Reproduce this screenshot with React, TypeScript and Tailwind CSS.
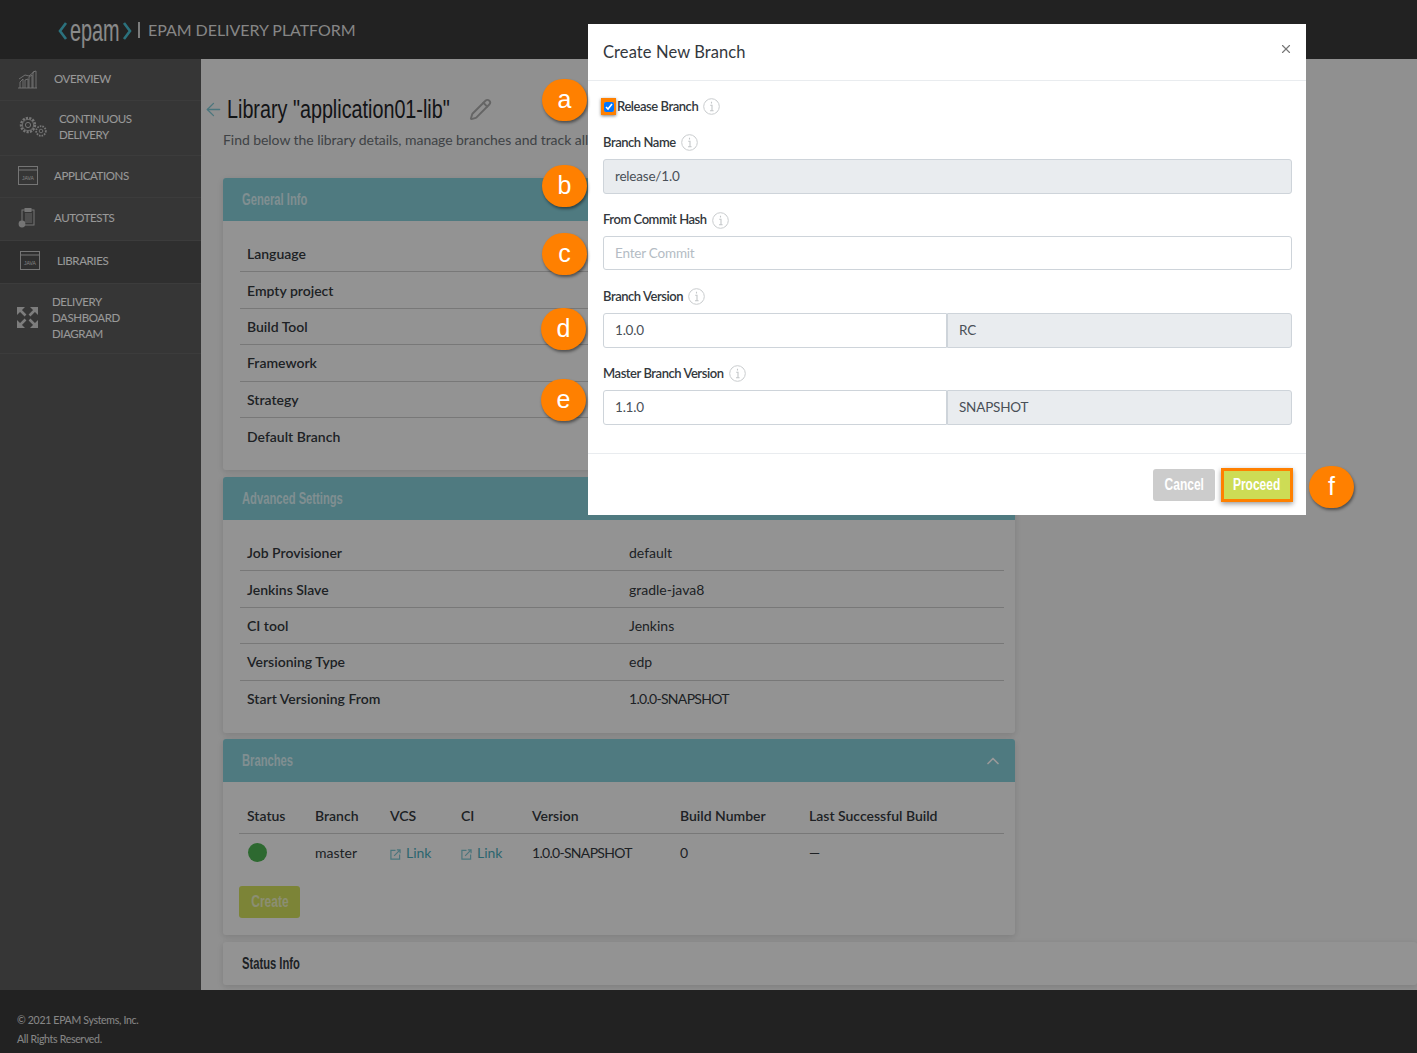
import { ArrowLeft, ChevronUp, Pencil, X } from "lucide-react";

const generalRows = ["Language", "Empty project", "Build Tool", "Framework", "Strategy", "Default Branch"];

const advancedRows = [
  ["Job Provisioner", "default"],
  ["Jenkins Slave", "gradle-java8"],
  ["CI tool", "Jenkins"],
  ["Versioning Type", "edp"],
  ["Start Versioning From", "1.0.0-SNAPSHOT"],
];

const InfoIcon = () => (
  <svg width="17" height="17" viewBox="0 0 17 17" fill="none" className="ml-[5px] shrink-0">
    <circle cx="8.5" cy="8.500" r="7.800" stroke="#c9ccce" strokeWidth="1" />
    <path d="M8.500 3.800v1.700M7.200 7.200H9v5.600M7 12.800h3.600" stroke="#c4c7c9" strokeWidth="1.100" />
  </svg>
);

const LinkIcon = () => (
  <svg width="11" height="11" viewBox="0 0 12 12" fill="none" className="mr-[5px] inline-block">
    <path d="M6 1.500H1v9.500h9.500V6" stroke="#7ec3cf" strokeWidth="1.300" />
    <path d="M4.500 7.500 11 1M7.500 1H11v3.500" stroke="#7ec3cf" strokeWidth="1.300" />
  </svg>
);

const JavaIcon = () => (
  <svg width="20" height="20" viewBox="0 0 20 20" fill="none">
    <rect x="0.500" y="0.500" width="19" height="18" stroke="#c4c4c4" />
    <path d="M0.500 4h19" stroke="#c4c4c4" />
    <text x="10" y="13.500" textAnchor="middle" fontSize="5" fontFamily="Liberation Sans" fill="#d8d8d8">
      JAVA
    </text>
  </svg>
);

const OverviewIcon = () => (
  <svg width="20" height="20" viewBox="0 0 20 20" fill="none" stroke="#c4c4c4" strokeWidth="0.900">
    <path d="M0 19h19M2 19v-6l3-3v9M7 19v-8l3-1v9M11 19V8l3-2v13M15 19V3l3-1v17" />
    <path d="M1 10 7 6l4 1 6-5" />
  </svg>
);

const GearsIcon = () => (
  <svg width="30" height="24" viewBox="0 0 30 24" fill="none" stroke="#c4c4c4">
    <circle cx="10" cy="10" r="7" strokeWidth="2.400" strokeDasharray="2.200 1.200" />
    <circle cx="10" cy="10" r="5.600" strokeWidth="0.800" />
    <circle cx="10" cy="10" r="2.600" strokeWidth="1" />
    <circle cx="23" cy="16" r="4.800" strokeWidth="1.800" strokeDasharray="1.600 1" />
    <circle cx="23" cy="16" r="1.800" strokeWidth="0.900" />
  </svg>
);

const TestsIcon = () => (
  <svg width="18" height="20" viewBox="0 0 18 20" fill="none" stroke="#c4c4c4" strokeWidth="1">
    <rect x="4" y="2" width="12" height="15" />
    <rect x="7" y="0.500" width="6" height="3" fill="#c4c4c4" />
    <path d="M7 6h7M7 8h7M7 10h7M7 12h7M7 14h7" strokeWidth="0.800" />
    <circle cx="4" cy="16" r="3.400" fill="#c4c4c4" stroke="none" />
  </svg>
);

const ExpandIcon = () => (
  <svg width="21" height="21" viewBox="0 0 21 21" fill="#d0d0d0" stroke="#d0d0d0">
    <path d="M0 0h8L0 8zM21 0h-8l8 8zM0 21h8l-8-8zM21 21h-8l8-8z" stroke="none" />
    <path d="M3 3l5.500 5.500M18 3l-5.500 5.500M3 18l5.500-5.500M18 18l-5.500-5.500" strokeWidth="2.600" />
  </svg>
);

const navItems = [
  { lines: ["OVERVIEW"], icon: <OverviewIcon />, cls: "h-[42px] pl-[18px] gap-[16px]" },
  { lines: ["CONTINUOUS", "DELIVERY"], icon: <GearsIcon />, cls: "h-[55px] pl-[18px] gap-[11px]" },
  { lines: ["APPLICATIONS"], icon: <JavaIcon />, cls: "h-[42px] pl-[18px] gap-[16px]" },
  { lines: ["AUTOTESTS"], icon: <TestsIcon />, cls: "h-[43px] pl-[18px] gap-[18px]" },
  { lines: ["LIBRARIES"], icon: <JavaIcon />, cls: "h-[43px] pl-[20px] gap-[17px] bg-[#4f4f4f]" },
  { lines: ["DELIVERY", "DASHBOARD", "DIAGRAM"], icon: <ExpandIcon />, cls: "h-[70px] pl-[17px] gap-[14px]" },
];

const Sidebar = () => (
  <aside className="w-[201px] shrink-0 bg-[#5a5a5a]">
    {navItems.map((item) => (
      <div key={item.lines[0]} className={`flex items-center border-b border-[#656565] pb-[2px] ${item.cls}`}>
        <span className="flex shrink-0 items-center">{item.icon}</span>
        <span className="font-['Lato',sans-serif] text-[11.500px] leading-[16px] tracking-[-0.400px] text-white">
          {item.lines.map((line) => (
            <span key={line} className="block">
              {line}
            </span>
          ))}
        </span>
      </div>
    ))}
  </aside>
);

// no condensed face is installed, so the heading font is squeezed from Liberation Sans
const Narrow = ({ children, className }: { children: React.ReactNode; className: string }) => (
  <span className={`inline-block origin-left scale-x-[0.7] whitespace-nowrap font-['Liberation_Sans',sans-serif] text-[16px] font-bold ${className}`}>
    {children}
  </span>
);

const CardHeader = ({ title }: { title: string }) => (
  <div className="flex h-[43px] items-center justify-between rounded-t-[3px] bg-[#84cbd5] pl-[19px] pr-[12px]">
    <Narrow className="text-[#d6eef2]">{title}</Narrow>
    <ChevronUp className="h-[20px] w-[20px] text-white" strokeWidth={2} />
  </div>
);

const InfoRow = ({ label, value, last }: { label: string; value?: string; last?: boolean }) => (
  <div className={`flex h-[36.400px] items-center pl-[7px] ${last ? "" : "border-b border-[#c9c9c9]"}`}>
    <span className="w-[382px] font-semibold text-[#33383d]">{label}</span>
    <span className={`text-[#33383d] ${last ? "tracking-[-0.700px]" : ""}`}>{value}</span>
  </div>
);

const Shell = ({ children, className }: { children: React.ReactNode; className: string }) => (
  <section className={`w-[792px] rounded-[3px] bg-[#f6f6f6] shadow-[0_2px_6px_rgba(0,0,0,0.12)] ${className}`}>
    {children}
  </section>
);

const Label = ({ text }: { text: string }) => (
  <div className="flex h-[17px] items-center text-[13px] font-semibold tracking-[-0.450px] text-[#33383d]">
    {text}
    <InfoIcon />
  </div>
);

const inputBase =
  "h-[34.500px] border border-[#ced4da] px-[11px] flex items-center text-[13.500px] text-[#495057] tracking-[-0.200px]";

const VersionRow = ({ label, left, right }: { label: string; left: string; right: string }) => (
  <div className="flex flex-col gap-[8px]">
    <Label text={label} />
    <div className="flex">
      <div className={`${inputBase} w-[344px] rounded-l-[3px] bg-white`}>{left}</div>
      <div className={`${inputBase} w-[345px] rounded-r-[3px] bg-[#e9ecef]`}>{right}</div>
    </div>
  </div>
);

const Callout = ({ letter, className }: { letter: string; className: string }) => (
  <div
    className={`absolute flex h-[42px] w-[45px] items-center justify-center rounded-full bg-[#ff8000] font-['Liberation_Sans',sans-serif] text-[25px] text-white shadow-[1px_2px_3px_rgba(0,0,0,0.45)] ${className}`}
  >
    {letter}
  </div>
);

const ButtonLabel = ({ children }: { children: string }) => (
  <span className="inline-block scale-x-[0.75] font-['Liberation_Sans',sans-serif] text-[16px] font-bold">{children}</span>
);

export default function App() {
  return (
    <div className="relative flex h-[1053px] flex-col overflow-hidden bg-[#f0f0f0] font-['Lato',sans-serif] text-[14px]">
      <header className="flex h-[59px] shrink-0 items-center bg-[#393939] pl-[58px]">
        <svg width="10" height="22" viewBox="0 0 10 22" fill="none" className="mt-[2px]">
          <path d="M8 3 2 11l6 8" stroke="#49bdd0" strokeWidth="2.600" />
        </svg>
        <span className="ml-[2px] inline-block w-[50px] origin-left scale-x-[0.62] font-['Liberation_Sans',sans-serif] text-[32px] leading-[30px] text-[#e6e6e6]">
          epam
        </span>
        <svg width="10" height="22" viewBox="0 0 10 22" fill="none" className="ml-[2px] mt-[2px]">
          <path d="M2 3l6 8-6 8" stroke="#49bdd0" strokeWidth="2.600" />
        </svg>
        <span className="ml-[6px] h-[16px] w-[2px] bg-[#cfcfcf]" />
        <span className="ml-[8px] text-[16px] tracking-[-0.050px] text-[#dfdfdf]">EPAM DELIVERY PLATFORM</span>
      </header>

      <div className="flex min-h-0 flex-1">
        <Sidebar />
        <main className="min-w-0 flex-1 overflow-hidden pl-[22px]">
          <div className="mt-[32px] flex h-[37px] items-center">
            <ArrowLeft className="-ml-[20px] mr-[3px] h-[21px] w-[21px] text-[#7cc4d0]" strokeWidth={1.500} />
            <h1 className="w-[231px] origin-left scale-x-[0.76] whitespace-nowrap font-['Liberation_Sans',sans-serif] text-[26px] text-[#1f2327]">
              Library "application01-lib"
            </h1>
            <Pencil className="ml-[11px] h-[23px] w-[23px] text-[#a8a8a8]" />
          </div>
          <p className="mt-[3px] h-[18px] leading-[18px] tracking-[-0.050px] text-[#6a6f74]">
            Find below the library details, manage branches and track all
          </p>

          <Shell className="mt-[29px] h-[292px]">
            <CardHeader title="General Info" />
            <div className="px-[11px] pt-[15px]">
              <div className="ml-[6px]">
                {generalRows.map((label, i) => (
                  <InfoRow key={label} label={label} last={i === generalRows.length - 1} />
                ))}
              </div>
            </div>
          </Shell>

          <Shell className="mt-[7px] h-[256px]">
            <CardHeader title="Advanced Settings" />
            <div className="px-[11px] pt-[15px]">
              <div className="ml-[6px]">
                {advancedRows.map(([label, value], i) => (
                  <InfoRow key={label} label={label} value={value} last={i === advancedRows.length - 1} />
                ))}
              </div>
            </div>
          </Shell>

          <Shell className="mt-[6px] h-[196px]">
            <CardHeader title="Branches" />
            <div className="pl-[16px] pr-[11px] pt-[15px]">
              <div className="grid h-[37px] grid-cols-[68px_75px_71px_71px_148px_129px_1fr] items-center border-b border-[#c9c9c9] pl-[8px] font-semibold text-[#33383d]">
                <span>Status</span>
                <span>Branch</span>
                <span>VCS</span>
                <span>CI</span>
                <span>Version</span>
                <span>Build Number</span>
                <span>Last Successful Build</span>
              </div>
              <div className="grid h-[37px] grid-cols-[68px_75px_71px_71px_148px_129px_1fr] items-center pl-[8px] text-[#33383d]">
                <span className="ml-[1px] block h-[19px] w-[19px] rounded-full bg-[#4cb050]" />
                <span>master</span>
                <span className="text-[#4aa9b8]">
                  <LinkIcon />
                  Link
                </span>
                <span className="text-[#4aa9b8]">
                  <LinkIcon />
                  Link
                </span>
                <span className="tracking-[-0.700px]">1.0.0-SNAPSHOT</span>
                <span>0</span>
                <span>—</span>
              </div>
              <button className="mt-[15px] h-[32px] w-[61px] rounded-[3px] bg-[#cfdc5c] text-[#e8edc0]">
                <ButtonLabel>Create</ButtonLabel>
              </button>
            </div>
          </Shell>

          <section className="mt-[7px] flex h-[43px] items-center rounded-[3px] bg-[#f6f6f6] pl-[19px] shadow-[0_2px_6px_rgba(0,0,0,0.12)]">
            <Narrow className="text-[#33383d]">Status Info</Narrow>
          </section>
        </main>
      </div>

      <footer className="flex h-[63px] shrink-0 flex-col justify-center gap-[3px] bg-[#393939] pl-[17px] pt-[15px] text-[10.500px] leading-[16px] tracking-[-0.300px] text-[#e0e0e0]">
        <span>© 2021 EPAM Systems, Inc.</span>
        <span>All Rights Reserved.</span>
      </footer>

      {/* backdrop and dialog */}
      <div className="absolute inset-0 bg-black/40 pl-[588px] pt-[24px]">
        <div className="w-[718px] bg-white text-[#495057]">
          <div className="flex h-[57px] items-center justify-between border-b border-[#e9ecef] pl-[15px] pr-[13px]">
            <h2 className="pt-[1px] text-[16.500px] tracking-[0.100px] text-[#33383d]">Create New Branch</h2>
            <X className="-mt-[6px] h-[14px] w-[14px] text-[#777]" strokeWidth={2} />
          </div>

          <div className="flex h-[372px] flex-col pl-[15px] pr-[14px]">
            <label className="mt-[17px] flex h-[17px] items-center text-[13px] font-semibold tracking-[-0.450px] text-[#33383d]">
              <span className="-ml-[2px] mr-[1px] flex h-[17px] w-[15px] items-center justify-center bg-[#ff8000] shadow-[0_1px_3px_rgba(0,0,0,0.5)]">
                <input type="checkbox" defaultChecked className="m-0 h-[10px] w-[10px] accent-[#0075ff]" />
              </span>
              Release Branch
              <InfoIcon />
            </label>

            <div className="mt-[19px] flex flex-col gap-[8px]">
              <Label text="Branch Name" />
              <div className={`${inputBase} w-[689px] rounded-[3px] bg-[#e9ecef]`}>release/1.0</div>
            </div>

            <div className="mt-[18px] flex flex-col gap-[7px]">
              <Label text="From Commit Hash" />
              <div className={`${inputBase} w-[689px] rounded-[3px] bg-white text-[#b4bcc4]`}>Enter Commit</div>
            </div>

            <div className="mt-[18px]">
              <VersionRow label="Branch Version" left="1.0.0" right="RC" />
            </div>
            <div className="mt-[17.500px]">
              <VersionRow label="Master Branch Version" left="1.1.0" right="SNAPSHOT" />
            </div>
          </div>

          <div className="flex h-[62px] items-center justify-end gap-[6px] border-t border-[#e9ecef] pr-[13px]">
            <button className="h-[32px] w-[62px] rounded-[3px] bg-[#cccccc] text-white">
              <ButtonLabel>Cancel</ButtonLabel>
            </button>
            <button className="h-[34px] w-[72px] border-[3px] border-[#ff8000] bg-[#cddc55] text-white shadow-[0_2px_5px_rgba(0,0,0,0.4)]">
              <ButtonLabel>Proceed</ButtonLabel>
            </button>
          </div>
        </div>
      </div>

      <Callout letter="a" className="left-[542px] top-[79px]" />
      <Callout letter="b" className="left-[542px] top-[165px]" />
      <Callout letter="c" className="left-[542px] top-[233px]" />
      <Callout letter="d" className="left-[541px] top-[308px]" />
      <Callout letter="e" className="left-[541px] top-[379px]" />
      <Callout letter="f" className="left-[1309px] top-[466px]" />
    </div>
  );
}
